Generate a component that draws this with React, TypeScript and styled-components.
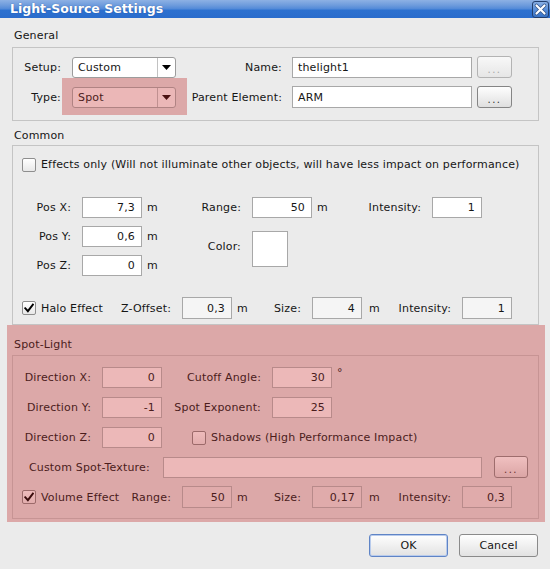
import React from "react";
import styled, { createGlobalStyle, ThemeProvider } from "styled-components";

type Tone = { hl: boolean };
type P = { theme: Tone };

const GlobalStyle = createGlobalStyle`
  html, body { margin: 0; padding: 0; background: #ebebeb; }
  body { font-family: "DejaVu Sans", "Liberation Sans", sans-serif; }
  *, *::before, *::after { box-sizing: border-box; }
`;

const base: Tone = { hl: false };
const pinkTone: Tone = { hl: true };

const PINK = "#dca8a8";
const ink = (p: P) => (p.theme.hl ? "#4b1c1c" : "#161616");
const fieldBorder = (p: P) => (p.theme.hl ? "#b88a8a" : "#a8a8a8");

const Window = styled.div`
  width: 550px;
  height: 569px;
  background: #ebebeb;
  display: flex;
  flex-direction: column;
  font-family: "DejaVu Sans", "Liberation Sans", sans-serif;
  font-size: 11px;
  letter-spacing: 0.16px;
  color: #161616;
  overflow: hidden;
`;

const TitleBar = styled.div`
  height: 18px;
  flex: none;
  display: flex;
  align-items: center;
  justify-content: space-between;
  padding: 0 1px 0 10px;
  background: linear-gradient(
    to bottom,
    #8db1e4 0%,
    #6d9bdc 30%,
    #5189d8 50%,
    #2d71d0 56%,
    #2a6ccc 100%
  );
`;

const Title = styled.span`
  color: #ffffff;
  font-weight: bold;
  font-size: 12.5px;
  letter-spacing: 0;
  line-height: 18px;
  text-shadow: 0 0 1px rgba(20, 50, 110, 0.6);
`;

const Body = styled.div`
  display: flex;
  flex-direction: column;
  padding: 0 11px 0 12px;
`;

const GroupTitle = styled.div<{ $pt: number; $pb: number }>`
  padding: ${(p) => p.$pt}px 0 ${(p) => p.$pb}px 2px;
  line-height: 13px;
  color: ${ink};
`;

const GroupBox = styled.div<{ $pad: string }>`
  border: 1px solid ${(p) => (p.theme.hl ? "#c79494" : "#c4c4c4")};
  padding: ${(p) => p.$pad};
  display: flex;
  flex-direction: column;
`;

const SpotArea = styled.div`
  margin: 0 -6px 0 -5px;
  padding: 0 6px 3px 5px;
  background: ${PINK};
`;

const FormRow = styled.div<{ $mt?: number }>`
  display: flex;
  align-items: center;
  height: 22px;
  margin-top: ${(p) => p.$mt ?? 0}px;
`;

const RowLabel = styled.div<{ $w: number; $pr?: number; $pl?: number; $left?: boolean }>`
  width: ${(p) => p.$w}px;
  flex: none;
  padding-right: ${(p) => p.$pr ?? 0}px;
  padding-left: ${(p) => p.$pl ?? 0}px;
  text-align: ${(p) => (p.$left ? "left" : "right")};
  white-space: nowrap;
  color: ${ink};
`;

const Field = styled.div<{ $w?: number; $h?: number; $left?: boolean; $dim?: boolean; $mr?: number }>`
  width: ${(p) => (p.$w ? `${p.$w}px` : "100%")};
  height: ${(p) => (p.$h ? `${p.$h}px` : "100%")};
  flex: none;
  margin-right: ${(p) => p.$mr ?? 0}px;
  border: 1px solid ${fieldBorder};
  background: ${(p) =>
    p.theme.hl ? (p.$dim ? "#e0abab" : "#ecb8b8") : p.$dim ? "#f5f5f5" : "#ffffff"};
  display: flex;
  align-items: center;
  justify-content: ${(p) => (p.$left ? "flex-start" : "flex-end")};
  padding: 0 6px 0 5px;
  color: ${ink};
  white-space: nowrap;
  overflow: hidden;
`;

const Swatch = styled.div`
  width: 36px;
  height: 36px;
  margin-top: 5px;
  grid-column: 5;
  grid-row: 2 / 4;
  align-self: start;
  background: #ffffff;
  border: 1px solid #a8a8a8;
`;

const ComboBox = styled.div`
  width: 104px;
  height: 21px;
  flex: none;
  display: flex;
  border: 1px solid ${(p) => (p.theme.hl ? "#b08383" : "#9c9c9c")};
  border-radius: 3px;
  background: ${(p) => (p.theme.hl ? "#ebb7b7" : "#ffffff")};
  color: ${ink};
  overflow: hidden;
`;

const ComboText = styled.div`
  flex: 1;
  display: flex;
  align-items: center;
  padding-left: 5px;
`;

const ComboArrow = styled.div`
  width: 18px;
  flex: none;
  display: flex;
  align-items: center;
  justify-content: center;
  border-left: 1px solid ${(p) => (p.theme.hl ? "#c09090" : "#c2c2c2")};
  color: ${(p) => (p.theme.hl ? "#4a1010" : "#000000")};
`;

const TypeHighlight = styled.div`
  flex: none;
  margin: -9px -11px -7px -10px;
  padding: 9px 11px 7px 10px;
  background: ${PINK};
`;

const DotsButton = styled.button<{ $disabled?: boolean; $ml?: number }>`
  width: ${(p) => (p.theme.hl ? 34 : 35)}px;
  height: 22px;
  flex: none;
  margin: 0 0 0 ${(p) => p.$ml ?? 0}px;
  padding: 4px 0 0 0;
  font-family: inherit;
  font-size: 10px;
  letter-spacing: 1.5px;
  border-radius: 3px;
  display: flex;
  align-items: center;
  justify-content: center;
  border: 1px solid
    ${(p) => (p.theme.hl ? "#9e6d6d" : p.$disabled ? "#b3b3b3" : "#858585")};
  background: ${(p) =>
    p.theme.hl
      ? "linear-gradient(#f0c0c0, #dba5a5)"
      : p.$disabled
      ? "linear-gradient(#f8f8f8, #e6e6e6)"
      : "linear-gradient(#fefefe, #dfdfdf)"};
  color: ${(p) => (p.theme.hl ? "#6a3030" : p.$disabled ? "#a8a8a8" : "#333333")};
`;

const CheckLabel = styled.div<{ $pl: number; $h?: number }>`
  display: flex;
  align-items: center;
  gap: 5px;
  padding-left: ${(p) => p.$pl}px;
  height: ${(p) => (p.$h ? `${p.$h}px` : "auto")};
  white-space: nowrap;
  color: ${ink};
`;

const CheckBox = styled.span`
  width: 14px;
  height: 14px;
  flex: none;
  border: 1px solid ${(p) => (p.theme.hl ? "#9c6a6a" : "#8e8e8e")};
  border-radius: 2px;
  background: ${(p) =>
    p.theme.hl ? "linear-gradient(#eebbbb, #e2adad)" : "linear-gradient(#ffffff, #e8e8e8)"};
  display: flex;
  align-items: center;
  justify-content: center;
  color: ${(p) => (p.theme.hl ? "#3a0c0c" : "#000000")};
`;

const PosGrid = styled.div`
  display: grid;
  grid-template-columns: 69px 60px 38px 72px 60px 48px 72px 50px;
  grid-template-rows: 21px 21px 21px;
  row-gap: 8px;
  margin-top: 25px;
`;

const GridLabel = styled.div<{ $pr?: number; $col?: number }>`
  align-self: center;
  text-align: right;
  padding-right: ${(p) => p.$pr ?? 11}px;
  white-space: nowrap;
  color: ${ink};
  ${(p) => (p.$col ? `grid-column: ${p.$col};` : "")}
`;

const ColorLabel = styled(GridLabel)`
  grid-column: 4;
  grid-row: 2 / 4;
  align-self: start;
  margin-top: 14px;
`;

const Unit = styled.div<{ $pl?: number }>`
  align-self: center;
  padding-left: ${(p) => p.$pl ?? 5}px;
  color: ${ink};
`;

const Degree = styled(Unit)`
  align-self: start;
  margin-top: -1px;
`;

const EffectRow = styled.div<{ $mt: number }>`
  display: grid;
  grid-template-columns: 107px 62px 50px 32px 48px 50px 28px 72px 50px;
  grid-template-rows: 22px;
  margin-top: ${(p) => p.$mt}px;
`;

const SpotGrid = styled.div`
  display: grid;
  grid-template-columns: 89px 60px 110px 60px 30px;
  grid-template-rows: 21px 21px 21px;
  row-gap: 9px;
`;

const ShadowsCell = styled.div`
  grid-column: 3 / 6;
  align-self: center;
`;

const ButtonBar = styled.div`
  display: flex;
  justify-content: flex-end;
  gap: 11px;
  margin-top: 12px;
  padding-right: 1px;
`;

const DialogButton = styled.button<{ $focus?: boolean }>`
  width: 79px;
  height: 23px;
  margin: 0;
  padding: 0;
  font-family: inherit;
  font-size: 11px;
  letter-spacing: 0.16px;
  color: #161616;
  border-radius: 3px;
  border: 1px solid ${(p) => (p.$focus ? "#5f84c6" : "#8a8a8a")};
  box-shadow: ${(p) => (p.$focus ? "inset 0 0 0 1px #b8cbec" : "none")};
  background: linear-gradient(#fefefe, #e2e2e2);
`;

function Check({ checked }: { checked?: boolean }) {
  return (
    <CheckBox>
      {checked && (
        <svg width="10" height="10" viewBox="0 0 10 10">
          <path
            d="M1.3 5.3 L3.9 8.2 L8.9 1.6"
            fill="none"
            stroke="currentColor"
            strokeWidth="2"
            strokeLinecap="square"
          />
        </svg>
      )}
    </CheckBox>
  );
}

function Combo({ value }: { value: string }) {
  return (
    <ComboBox>
      <ComboText>{value}</ComboText>
      <ComboArrow>
        <svg width="9" height="5" viewBox="0 0 9 5">
          <polygon points="0,0 9,0 4.5,5" fill="currentColor" />
        </svg>
      </ComboArrow>
    </ComboBox>
  );
}

function CloseIcon() {
  return (
    <svg width="17" height="17" viewBox="0 0 17 17">
      <defs>
        <linearGradient id="cg" x1="0" y1="0" x2="0" y2="1">
          <stop offset="0" stopColor="#8ab0e4" />
          <stop offset="0.5" stopColor="#5a8fd8" />
          <stop offset="1" stopColor="#3570c4" />
        </linearGradient>
      </defs>
      <rect x="0.5" y="0.5" width="16" height="16" rx="2.5" fill="url(#cg)" stroke="#223f6e" />
      <path d="M4.5 4.5 L12.5 12.5 M12.5 4.5 L4.5 12.5" stroke="#2d5088" strokeWidth="3.6" strokeLinecap="round" />
      <path d="M4.5 4.5 L12.5 12.5 M12.5 4.5 L4.5 12.5" stroke="#ffffff" strokeWidth="2.2" strokeLinecap="round" />
    </svg>
  );
}

export default function App() {
  return (
    <ThemeProvider theme={base}>
      <GlobalStyle />
      <Window>
        <TitleBar>
          <Title>Light-Source Settings</Title>
          <CloseIcon />
        </TitleBar>
        <Body>
          <GroupTitle $pt={11} $pb={5}>General</GroupTitle>
          <GroupBox $pad="8px 0 12px 0">
            <FormRow>
              <RowLabel $w={59} $pr={11}>Setup:</RowLabel>
              <Combo value="Custom" />
              <RowLabel $w={116} $pr={10}>Name:</RowLabel>
              <Field $w={180} $h={21} $left $mr={5}>thelight1</Field>
              <DotsButton type="button" $disabled>...</DotsButton>
            </FormRow>
            <FormRow $mt={8}>
              <RowLabel $w={59} $pr={11}>Type:</RowLabel>
              <ThemeProvider theme={pinkTone}>
                <TypeHighlight>
                  <Combo value="Spot" />
                </TypeHighlight>
              </ThemeProvider>
              <RowLabel $w={116} $pr={10}>Parent Element:</RowLabel>
              <Field $w={180} $h={22} $left $mr={5}>ARM</Field>
              <DotsButton type="button">...</DotsButton>
            </FormRow>
          </GroupBox>

          <GroupTitle $pt={8} $pb={3}>Common</GroupTitle>
          <GroupBox $pad="11px 0 5px 0">
            <CheckLabel $pl={9} $h={15}>
              <Check />
              Effects only (Will not illuminate other objects, will have less impact on performance)
            </CheckLabel>
            <PosGrid>
              <GridLabel $col={1}>Pos X:</GridLabel>
              <Field>7,3</Field>
              <Unit>m</Unit>
              <GridLabel>Range:</GridLabel>
              <Field>50</Field>
              <Unit>m</Unit>
              <GridLabel>Intensity:</GridLabel>
              <Field>1</Field>

              <GridLabel $col={1}>Pos Y:</GridLabel>
              <Field>0,6</Field>
              <Unit>m</Unit>
              <ColorLabel>Color:</ColorLabel>
              <Swatch />

              <GridLabel $col={1}>Pos Z:</GridLabel>
              <Field>0</Field>
              <Unit>m</Unit>
            </PosGrid>
            <EffectRow $mt={21}>
              <CheckLabel $pl={9}>
                <Check checked />
                Halo Effect
              </CheckLabel>
              <GridLabel>Z-Offset:</GridLabel>
              <Field $dim>0,3</Field>
              <Unit>m</Unit>
              <GridLabel>Size:</GridLabel>
              <Field $dim>4</Field>
              <Unit $pl={7}>m</Unit>
              <GridLabel>Intensity:</GridLabel>
              <Field $dim>1</Field>
            </EffectRow>
          </GroupBox>

          <ThemeProvider theme={pinkTone}>
            <SpotArea>
              <GroupTitle $pt={13} $pb={4}>Spot-Light</GroupTitle>
              <GroupBox $pad="11px 0 10px 0">
                <SpotGrid>
                  <GridLabel>Direction X:</GridLabel>
                  <Field>0</Field>
                  <GridLabel>Cutoff Angle:</GridLabel>
                  <Field>30</Field>
                  <Degree $pl={5}>°</Degree>

                  <GridLabel>Direction Y:</GridLabel>
                  <Field>-1</Field>
                  <GridLabel>Spot Exponent:</GridLabel>
                  <Field>25</Field>
                  <div />

                  <GridLabel>Direction Z:</GridLabel>
                  <Field>0</Field>
                  <ShadowsCell>
                    <CheckLabel $pl={30}>
                      <Check />
                      Shadows (High Performance Impact)
                    </CheckLabel>
                  </ShadowsCell>
                </SpotGrid>
                <FormRow $mt={8}>
                  <RowLabel $w={150} $pl={16} $left>Custom Spot-Texture:</RowLabel>
                  <Field $w={319} $h={21} $left />
                  <DotsButton type="button" $ml={12}>...</DotsButton>
                </FormRow>
                <EffectRow $mt={8}>
                  <CheckLabel $pl={9}>
                    <Check checked />
                    Volume Effect
                  </CheckLabel>
                  <GridLabel>Range:</GridLabel>
                  <Field $dim>50</Field>
                  <Unit>m</Unit>
                  <GridLabel>Size:</GridLabel>
                  <Field $dim>0,17</Field>
                  <Unit $pl={7}>m</Unit>
                  <GridLabel>Intensity:</GridLabel>
                  <Field $dim>0,3</Field>
                </EffectRow>
              </GroupBox>
            </SpotArea>
          </ThemeProvider>

          <ButtonBar>
            <DialogButton type="button" $focus>OK</DialogButton>
            <DialogButton type="button">Cancel</DialogButton>
          </ButtonBar>
        </Body>
      </Window>
    </ThemeProvider>
  );
}
